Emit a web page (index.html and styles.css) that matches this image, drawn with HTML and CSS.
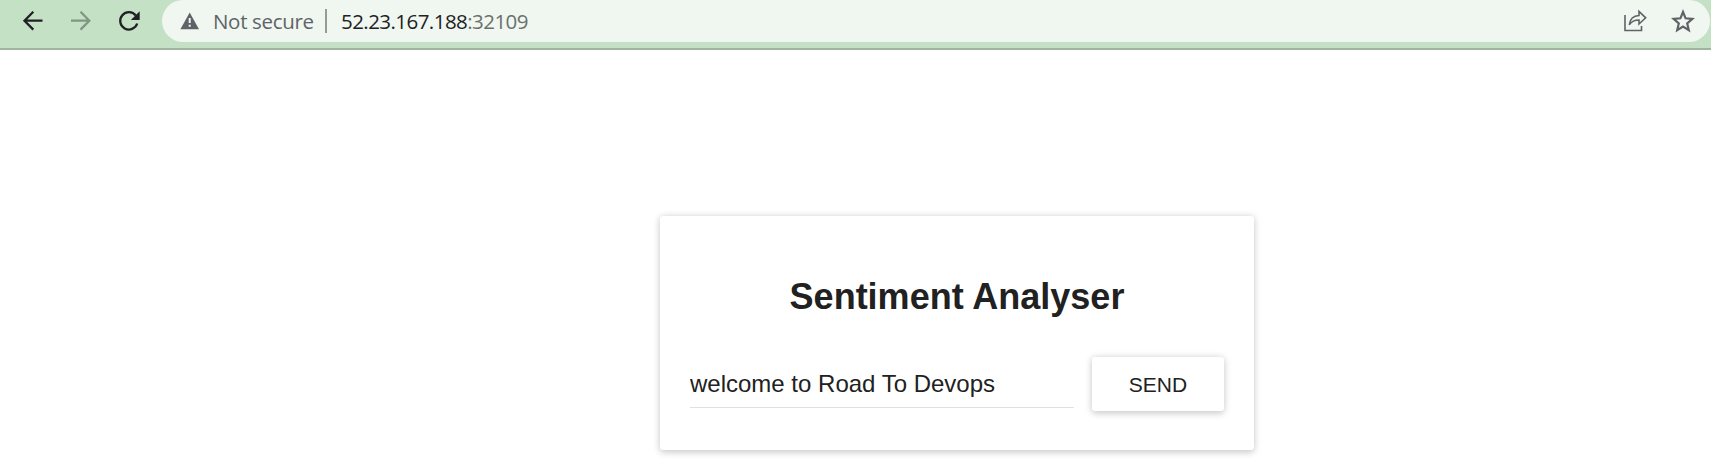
FILE: index.html
```html
<!DOCTYPE html>
<html lang="en">
<head>
<meta charset="utf-8">
<title>Sentiment Analyser</title>
<link rel="stylesheet" href="styles.css">
</head>
<body>
<header class="toolbar">
  <nav class="nav">
    <svg class="icon" width="24" height="24" viewBox="0 0 24 24"><path d="M21.500 11.700H4M12.300 2.800L3.500 11.700l8.800 8.900"/></svg>
    <svg class="icon icon-disabled" width="24" height="24" viewBox="0 0 24 24"><path d="M2 11.700h17.500M11.500 2.800l8.800 8.900-8.800 8.900"/></svg>
    <svg class="icon" width="24" height="24" viewBox="0 0 24 24"><path d="M20.200 14.500A8.700 8.700 0 1 1 18.800 6.500"/><path class="solid" d="M22.700 2.200v8.800h-8.800z"/></svg>
  </nav>
  <div class="omnibox">
    <svg class="warning" width="20" height="18" viewBox="0 0 20 18"><path class="warn-shape" d="M9.700.5L19 17.200H.4z"/><path class="warn-mark" d="M8.700 6h2v5h-2zM8.700 12.700h2v2h-2z"/></svg>
    <span class="security">Not secure</span>
    <span class="divider"></span>
    <span class="url"><span class="host">52.23.167.188</span><span class="port">:32109</span></span>
    <span class="actions">
      <svg class="action" width="24" height="24" viewBox="0 0 24 24"><path d="M2 6v15.500h16.500V17"/><path d="M6.200 15.800C7 10 10.500 6.700 16 6.500V2.400l6.700 6.400-6.700 6.200V11C11.500 11 8.500 12.500 6.200 15.800z"/></svg>
      <svg class="action star" width="24" height="24" viewBox="0 0 24 24"><path d="M12 3l2.600 6.300 6.800.6-5.200 4.500 1.600 6.700L12 17.500l-5.800 3.600 1.600-6.700-5.200-4.500 6.800-.6z"/></svg>
    </span>
  </div>
</header>
<main class="page">
  <section class="card">
    <h1 class="title">Sentiment Analyser</h1>
    <form class="form">
      <input class="sentence" type="text" value="welcome to Road To Devops">
      <button class="send" type="button">SEND</button>
    </form>
  </section>
</main>
</body>
</html>
```
FILE: styles.css
```css
* { box-sizing: border-box; }
body {
  margin: 0;
  height: 465px;
  overflow: hidden;
  background: #fff;
  color: #212121;
  font-family: "Liberation Sans", Arial, sans-serif;
}
.toolbar {
  display: flex;
  height: 50px;
  padding-right: 1px;
  background: #c4e1c5;
  border-bottom: 2px solid #9fb5a0;
}
.nav {
  display: flex;
  gap: 24px;
  width: 162px;
  padding: 9px 0 0 21px;
}
.icon { fill: none; stroke: #202124; stroke-width: 2.300; }
.icon-disabled { stroke: #819582; }
.solid { fill: #202124; stroke: none; }
.omnibox {
  display: flex;
  flex: 1;
  align-items: center;
  height: 42px;
  padding: 0 15px 0 18px;
  border-radius: 21px;
  background: #f0f7f0;
  font: 20.500px/42px "Open Sans", "Noto Sans", sans-serif;
  white-space: nowrap;
}
.warn-shape { fill: #5f6368; }
.warn-mark { fill: #f0f7f0; }
.security {
  width: 112px;
  margin-left: 13px;
  color: #5f6368;
  letter-spacing: -0.320px;
}
.divider {
  width: 2px;
  height: 24px;
  background: #979b98;
}
.url { margin-left: 14px; letter-spacing: -0.550px; }
.host { color: #202124; }
.port { color: #6b706d; }
.actions {
  display: flex;
  gap: 24px;
  margin-left: auto;
}
.action { fill: none; stroke: #5f6368; stroke-width: 1.600; }
.star { stroke-width: 2.200; }
.page {
  display: flex;
  padding: 166px 0 0 660px;
}
.card {
  width: 594px;
  height: 234px;
  padding: 60px 30px 0;
  border-radius: 3px;
  background: #fff;
  box-shadow: 0 1.500px 9px rgba(0,0,0,.12), 0 1.500px 6px rgba(0,0,0,.12);
}
.title {
  margin: 0;
  font-size: 36px;
  line-height: 41px;
  text-align: center;
}
.form {
  display: flex;
  gap: 18px;
  margin-top: 40px;
}
.sentence {
  width: 384px;
  height: 51px;
  padding: 3px 0 0;
  border: 0;
  border-bottom: 1px solid #e0e0e0;
  outline: 0;
  background: none;
  color: #212121;
  font: 24px "Liberation Sans", Arial, sans-serif;
}
.send {
  width: 132px;
  height: 54px;
  padding: 2px 0 0;
  border: 0;
  border-radius: 3px;
  background: #fff;
  box-shadow: 0 1.500px 9px rgba(0,0,0,.12), 0 1.500px 6px rgba(0,0,0,.12);
  color: #212121;
  font: 21px "Liberation Sans", Arial, sans-serif;
}
```
